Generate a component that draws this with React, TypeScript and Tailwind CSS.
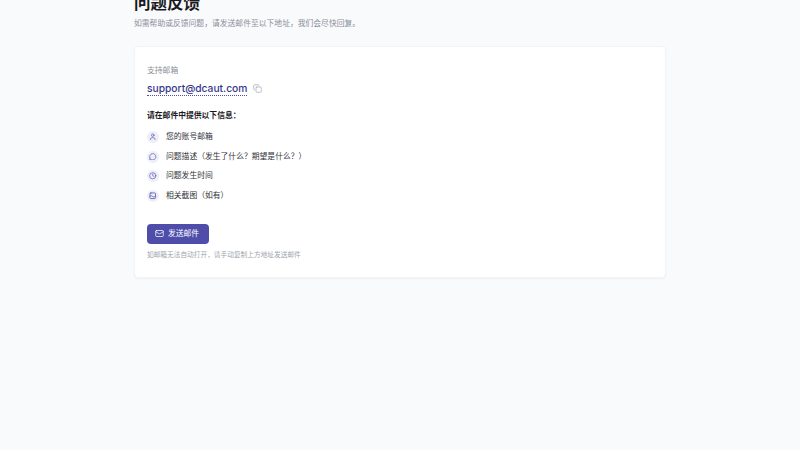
import { Clock, Copy, Mail, MessageCircle, User } from "lucide-react";

function PhotoIcon({ className }: { className?: string }) {
  return (
    <svg viewBox="0 0 24 24" fill="none" stroke="currentColor" strokeWidth="2.4" strokeLinecap="round" strokeLinejoin="round" className={className}>
      <rect x="3" y="3" width="18" height="18" rx="3" />
      <path d="M3 14c3-3 5-3 8 0s6 3 10-1" />
    </svg>
  );
}

const items = [
  { icon: User, label: "您的账号邮箱" },
  { icon: MessageCircle, label: "问题描述（发生了什么？期望是什么？）" },
  { icon: Clock, label: "问题发生时间" },
  { icon: PhotoIcon, label: "相关截图（如有）" },
];

export default function App() {
  return (
    <div className="h-[450px] overflow-hidden bg-[#f9fafc] font-['Inter','Noto_Sans_CJK_SC',sans-serif]">
      <div className="mx-auto -mt-[9px] w-[532px]">
        <h1 className="text-[16.5px] leading-[24px] font-semibold text-[#1a1a1f]">问题反馈</h1>
        <p className="mt-[1px] text-[7.8px] leading-[14px] text-[#8a8f99]">
          如需帮助或反馈问题，请发送邮件至以下地址，我们会尽快回复。
        </p>
        <div className="mt-[16px] rounded-[4px] border border-[#f3f4f6] bg-white px-[12px] pt-[16px] pb-[16px] shadow-[0_1px_2px_rgba(0,0,0,0.04)]">
          <div className="text-[7.8px] leading-[14px] text-[#8a8f99]">支持邮箱</div>
          <div className="mt-[5px] flex items-center gap-[6px]">
            <a className="border-b border-dotted border-[#4e4eaa] text-[10.25px] leading-[13px] font-medium text-[#35358a]">
              support@dcaut.com
            </a>
            <Copy className="-mt-px h-[9px] w-[9px] text-[#a8acb5]" />
          </div>
          <div className="mt-[12px] text-[7.8px] leading-[14px] font-semibold text-[#1a1a1f]">
            请在邮件中提供以下信息：
          </div>
          <ul className="mt-[5px] flex flex-col">
            {items.map((item) => (
              <li key={item.label} className="flex h-[19.7px] items-center gap-[7px] text-[7.8px] text-[#2f3138]">
                <span className="flex h-[12px] w-[12px] items-center justify-center rounded-full bg-[#eeeef8]">
                  <item.icon className="h-[7.5px] w-[7.5px] text-[#4e4eaa]" />
                </span>
                {item.label}
              </li>
            ))}
          </ul>
          <button className="mt-[18px] flex h-[20px] w-[62px] items-center justify-center gap-[4px] rounded-[4px] bg-[#4e4eaa] pr-[2px] text-[7.8px] text-white">
            <Mail className="h-[9px] w-[9px]" />
            发送邮件
          </button>
          <p className="mt-[5px] text-[6.7px] leading-[12px] text-[#a0a4ad]">
            如邮箱无法自动打开，请手动复制上方地址发送邮件
          </p>
        </div>
      </div>
    </div>
  );
}
